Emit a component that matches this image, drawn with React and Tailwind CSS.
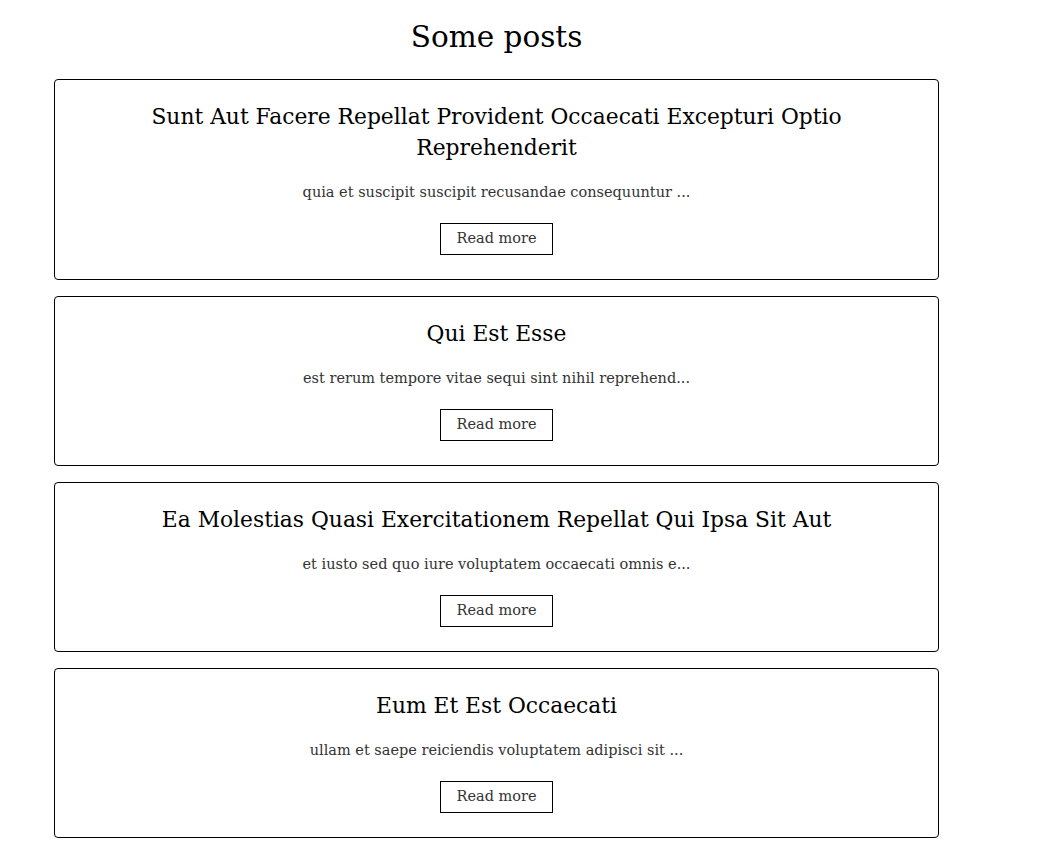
const posts = [
  {
    title: 'Sunt Aut Facere Repellat Provident Occaecati Excepturi Optio Reprehenderit',
    body: 'quia et suscipit suscipit recusandae consequuntur ...',
  },
  {
    title: 'Qui Est Esse',
    body: 'est rerum tempore vitae sequi sint nihil reprehend...',
  },
  {
    title: 'Ea Molestias Quasi Exercitationem Repellat Qui Ipsa Sit Aut',
    body: 'et iusto sed quo iure voluptatem occaecati omnis e...',
  },
  {
    title: 'Eum Et Est Occaecati',
    body: 'ullam et saepe reiciendis voluptatem adipisci sit ...',
  },
]

function PostCard({ title, body }) {
  return (
    <article className="flex flex-col items-center rounded border border-black px-4 pt-[21px] pb-[24px] text-center">
      <h2 className="max-w-[720px] text-[21.8px] leading-[31px] text-black">{title}</h2>
      <p className="mt-[17px] text-[14.5px] leading-6 text-[#333]">{body}</p>
      <button className="mt-[19px] h-[32px] border border-black px-[15px] text-[14.5px] text-[#333]">
        Read more
      </button>
    </article>
  )
}

export default function App() {
  return (
    <div className="min-h-screen bg-white font-['DejaVu_Serif',serif]">
      <div className="ml-[54px] w-[885px] pt-[15px]">
        <h1 className="text-center text-[29.5px] leading-[44px] text-black">Some posts</h1>
        <div className="mt-[20px] flex flex-col gap-4">
          {posts.map((p) => (
            <PostCard key={p.title} {...p} />
          ))}
        </div>
      </div>
    </div>
  )
}
